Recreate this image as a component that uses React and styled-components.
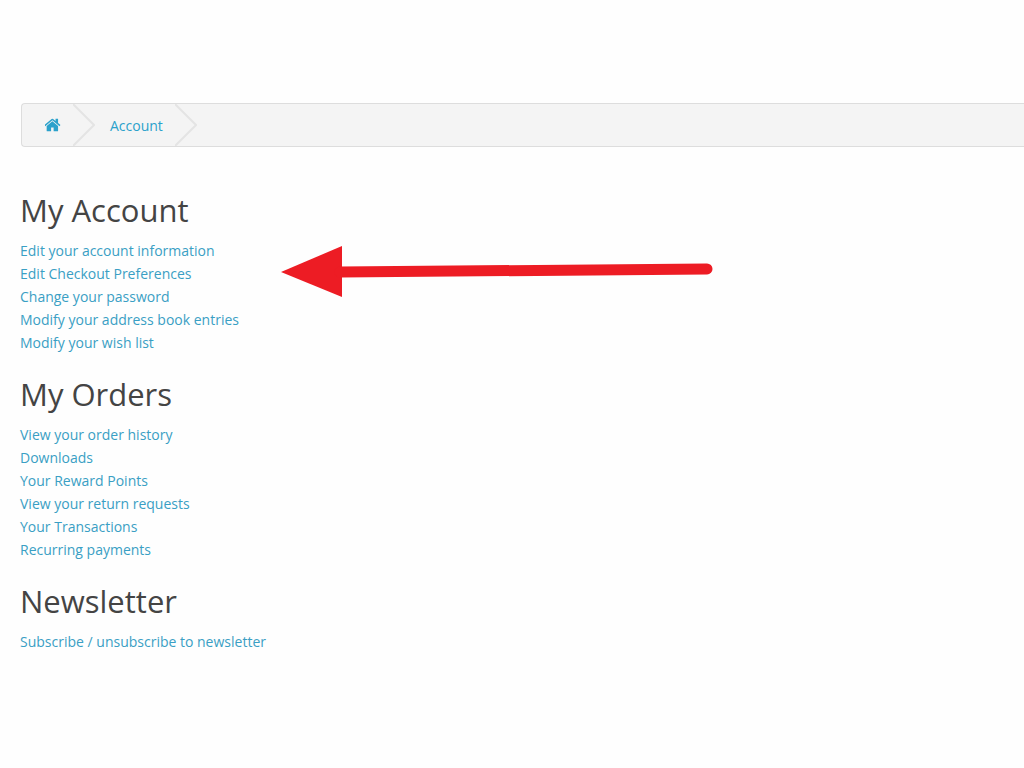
import React from "react";
import styled, { createGlobalStyle } from "styled-components";

const GlobalStyle = createGlobalStyle`
  * {
    box-sizing: border-box;
  }
  body {
    margin: 0;
    background: #fefefe;
    color: #444;
    font-family: "Open Sans", sans-serif;
    font-size: 14px;
    line-height: 23px;
    overflow-x: hidden;
  }
`;

const Page = styled.div`
  padding: 103px 0 60px 20px;
`;

const Breadcrumb = styled.ol`
  display: flex;
  height: 44px;
  margin: 0 0 43px 1px;
  padding: 0;
  list-style: none;
  background: #f4f4f4;
  border: 1px solid #ddd;
  border-right: none;
  border-radius: 4px 0 0 4px;
`;

const Crumb = styled.li`
  display: flex;
  align-items: center;
  padding-left: ${(props) => (props.$first ? "23px" : "15px")};
`;

const CrumbLink = styled.a`
  display: flex;
  color: #2ba1cb;
  text-decoration: none;
  margin-right: 12px;
`;

const Chevron = styled.svg`
  display: block;
  width: 22px;
  height: 42px;
  fill: none;
  stroke: #e4e4e4;
  stroke-width: 2;
`;

const HomeIcon = styled.svg`
  width: 16px;
  height: 14px;
  fill: currentColor;
`;

const Content = styled.main`
  position: relative;
  display: flex;
  flex-direction: column;
  gap: 20px;
`;

const Title = styled.h2`
  margin: 0 0 8px;
  font-size: 31px;
  font-weight: 400;
  line-height: 41px;
`;

const LinkList = styled.ul`
  margin: 0;
  padding: 0;
  list-style: none;
`;

const ListLink = styled.a`
  color: #3a9fc4;
  text-decoration: none;
`;

const Arrow = styled.svg`
  position: absolute;
  top: 56px;
  left: 260px;
  width: 434px;
  height: 52px;
  pointer-events: none;
`;

const sections = [
  {
    title: "My Account",
    links: [
      "Edit your account information",
      "Edit Checkout Preferences",
      "Change your password",
      "Modify your address book entries",
      "Modify your wish list",
    ],
  },
  {
    title: "My Orders",
    links: [
      "View your order history",
      "Downloads",
      "Your Reward Points",
      "View your return requests",
      "Your Transactions",
      "Recurring payments",
    ],
  },
  {
    title: "Newsletter",
    links: ["Subscribe / unsubscribe to newsletter"],
  },
];

const Separator = () => (
  <Chevron viewBox="0 0 22 42" aria-hidden="true">
    <path d="M0 0 L21 21 L0 42" />
  </Chevron>
);

const App = () => {
  return (
    <>
      <GlobalStyle />
      <Page>
        <nav aria-label="Breadcrumb">
          <Breadcrumb>
            <Crumb $first>
              <CrumbLink href="#home" aria-label="Home">
                <HomeIcon viewBox="89 253 1614 1283">
                  <path d="M1408 992v480q0 26-19 45t-45 19h-384v-384h-256v384h-384q-26 0-45-19t-19-45v-480q0-1 .5-3t.5-3l575-474 575 474q1 2 1 6zm223-69l-62 74q-8 9-21 11h-3q-13 0-21-7l-692-577-692 577q-12 8-24 7-13-2-21-11l-62-74q-8-10-7-23.500t11-21.500l719-599q32-26 76-26t76 26l244 204v-195q0-14 9-23t23-9h192q14 0 23 9t9 23v408l219 182q10 8 11 21.500t-7 23.500z" />
                </HomeIcon>
              </CrumbLink>
              <Separator />
            </Crumb>
            <Crumb>
              <CrumbLink href="#account">Account</CrumbLink>
              <Separator />
            </Crumb>
          </Breadcrumb>
        </nav>
        <Content>
          {sections.map((section) => (
            <section key={section.title}>
              <Title>{section.title}</Title>
              <LinkList>
                {section.links.map((link) => (
                  <li key={link}>
                    <ListLink href="#account">{link}</ListLink>
                  </li>
                ))}
              </LinkList>
            </section>
          ))}
          <Arrow viewBox="0 0 434 52" aria-hidden="true">
            <path d="M1 26 L62 0 V51 Z" fill="#ed1c24" />
            <path
              d="M60 26 L427 23"
              stroke="#ed1c24"
              strokeWidth="11"
              strokeLinecap="round"
            />
          </Arrow>
        </Content>
      </Page>
    </>
  );
};

export default App;
